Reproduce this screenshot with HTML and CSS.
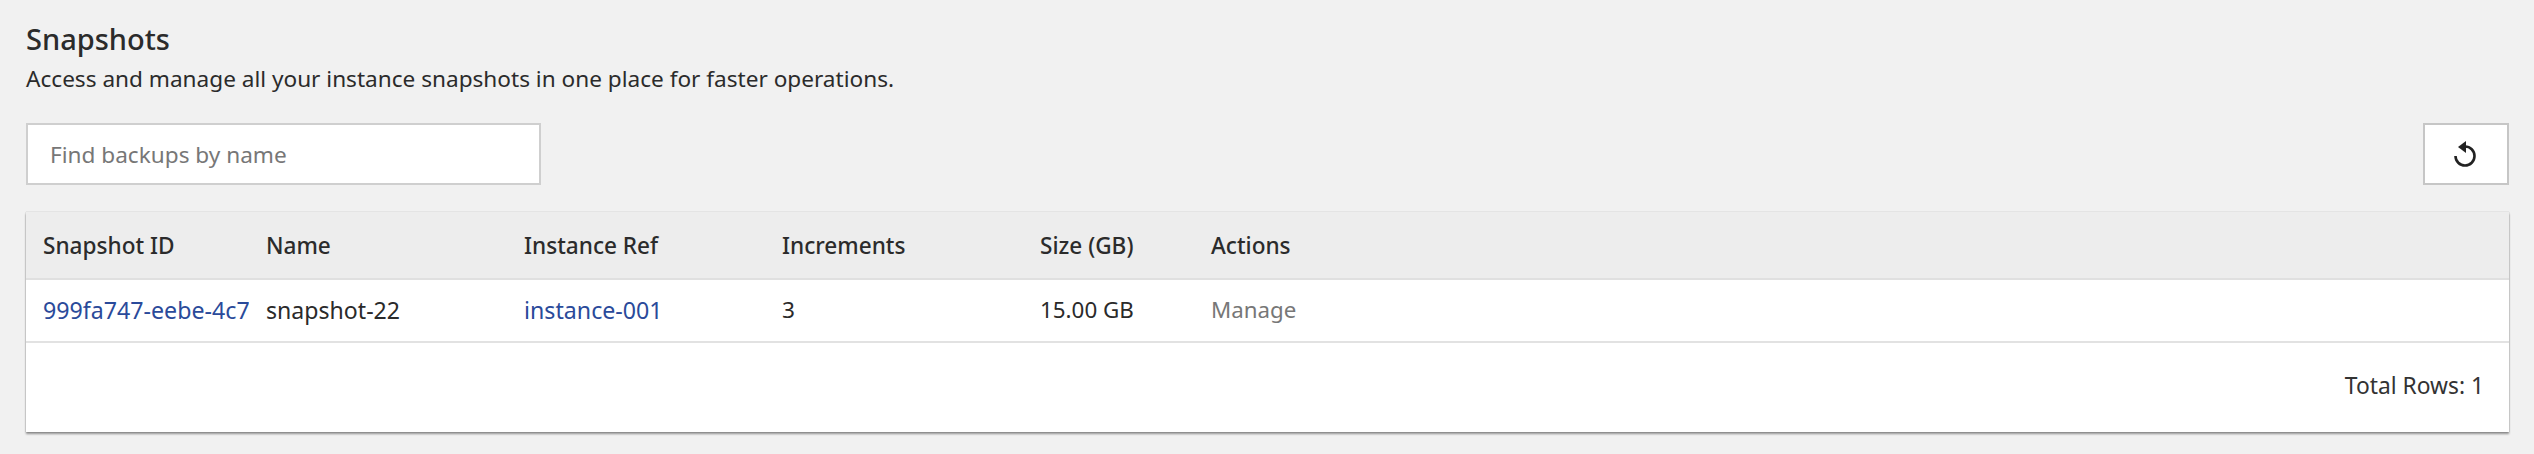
FILE: index.html
```html
<!DOCTYPE html>
<html lang="en">
<head>
<meta charset="utf-8">
<title>Snapshots</title>
<link rel="stylesheet" href="styles.css">
</head>
<body>
<main class="page">
  <h1 class="title">Snapshots</h1>
  <p class="subtitle">Access and manage all your instance snapshots in one place for faster operations.</p>
  <div class="toolbar">
    <input class="search" type="text" placeholder="Find backups by name">
    <button class="refresh" type="button" aria-label="Refresh">
      <svg class="refresh-icon" viewBox="0 0 24 26" width="24" height="26">
        <path d="M12 5.5A9.5 9.5 0 1 1 2.5 15" fill="none" stroke="#222" stroke-width="2.6"/>
        <path d="M13 0v12L5 6z" fill="#222"/>
      </svg>
    </button>
  </div>
  <section class="card">
    <table class="grid">
      <colgroup>
        <col class="c-id"><col class="c-name"><col class="c-ref"><col class="c-inc"><col class="c-size"><col>
      </colgroup>
      <thead>
        <tr><th>Snapshot ID</th><th>Name</th><th>Instance Ref</th><th>Increments</th><th>Size (GB)</th><th>Actions</th></tr>
      </thead>
      <tbody>
        <tr>
          <td class="clip"><a class="link" href="#">999fa747-eebe-4c7</a></td>
          <td class="wide">snapshot-22</td>
          <td><a class="link" href="#">instance-001</a></td>
          <td>3</td>
          <td class="size">15.00 GB</td>
          <td class="muted">Manage</td>
        </tr>
      </tbody>
    </table>
    <footer class="total">Total Rows: 1</footer>
  </section>
</main>
</body>
</html>
```

FILE: styles.css
```css
html, body { margin: 0; padding: 0; }
body {
  background: #f1f1f1;
  color: #2a2a2a;
  font-family: "Noto Sans", "Open Sans", sans-serif;
  width: 2534px;
  height: 454px;
  overflow: hidden;
}
.page { padding: 20px 25px 0 26px; }
.title { margin: 0; font-size: 29px; line-height: 38px; font-weight: 500; color: #2b2b2b; }
.subtitle { margin: 6px 0 0; font-size: 22.6px; line-height: 30px; color: #2b2b2b; }
.toolbar { display: flex; justify-content: space-between; margin-top: 29px; }
.search {
  box-sizing: border-box; width: 515px; height: 62px; padding: 0 22px;
  border: 2px solid #cfcfcf; background: #fff; font: inherit; font-size: 22.6px; outline: none;
}
.search::placeholder { color: #777; opacity: 1; }
.refresh {
  box-sizing: border-box; width: 86px; height: 62px; padding: 0 2px 0 0;
  border: 2px solid #c6c6c6; background: #fff;
  display: flex; align-items: center; justify-content: center;
}
.card { margin-top: 27px; background: #fff; box-shadow: 0 2px 2px rgba(0,0,0,.4), 0 0 1px rgba(0,0,0,.3); }
.grid { width: 100%; border-collapse: collapse; table-layout: fixed; font-size: 22.6px; }
.c-id { width: 223px; }
.c-name { width: 258px; }
.c-ref { width: 258px; }
.c-inc { width: 258px; }
.c-size { width: 171px; }
th { height: 66px; padding: 0 0 0 17px; background: #ededed; border-bottom: 2px solid #e0e0e0; text-align: left; font-weight: 500; color: #2b2b2b; }
td { box-sizing: border-box; height: 63px; padding: 0 0 2px 17px; border-bottom: 2px solid #e2e2e2; white-space: nowrap; }
.clip { overflow: hidden; }
.wide { font-size: 23.1px; }
.size { font-size: 22.4px; }
.link { color: #2a4a9a; text-decoration: none; font-size: 23.2px; }
.muted { color: #777; font-size: 22.3px; }
.total { box-sizing: border-box; height: 89px; padding: 0 25px 5px 0; display: flex; align-items: center; justify-content: flex-end; font-size: 22.8px; color: #333; }
```
